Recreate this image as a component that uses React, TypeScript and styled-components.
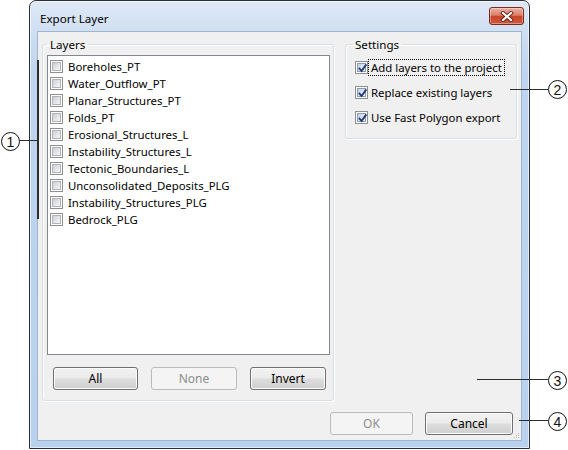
import React from 'react';
import styled, { createGlobalStyle } from 'styled-components';

const GlobalStyle = createGlobalStyle`
  html, body { margin: 0; padding: 0; background: #fff; }
  body { font-family: "Noto Sans", "Open Sans", sans-serif; font-size: 11.4px; color: #000; }
  * { box-sizing: border-box; }
`;

const Page = styled.div`
  position: relative;
  width: 568px;
  height: 450px;
  display: flex;
  padding-left: 29px;
`;

const Window = styled.div`
  width: 501px;
  height: 449px;
  display: flex;
  flex-direction: column;
  border: 1px solid #2b2f36;
  border-radius: 7px 7px 0 0;
  padding: 0 7px 7px 7px;
  background: linear-gradient(#dfe9f6 0px, #d0dff2 30px, #bfd5ef 70px, #b9d1ee 100%);
  box-shadow: inset 0 0 0 1px rgba(255, 255, 255, 0.6);
`;

const TitleBar = styled.div`
  height: 30px;
  display: flex;
  justify-content: space-between;
  align-items: flex-start;
  margin-right: -2px;
`;

const Title = styled.div`
  padding: 10px 0 0 3px;
  line-height: 16px;
  font-size: 11.6px;
  color: #000;
`;

const CloseButton = styled.div`
  margin-top: 6px;
  width: 35px;
  height: 18px;
  border: 1px solid #7a2a1b;
  border-radius: 3px;
  background: linear-gradient(#ebb3a5 0%, #dd7e68 45%, #c8442a 52%, #cc5a40 100%);
  display: flex;
  align-items: center;
  justify-content: center;
  box-shadow: inset 0 0 0 1px rgba(255, 255, 255, 0.35);
`;

const Client = styled.div`
  position: relative;
  flex: 1;
  display: flex;
  flex-direction: column;
  background: #f0f0f0;
  border: 1px solid #9fb4cf;
`;

const TopArea = styled.div`
  display: flex;
  align-items: flex-start;
  padding: 5px 0 0 4px;
`;

const Group = styled.fieldset<{ $w: number; $pad: string; $ml?: number }>`
  margin: 0 0 0 ${(p) => p.$ml ?? 0}px;
  width: ${(p) => p.$w}px;
  min-width: 0;
  border: 1px solid #d5dfe5;
  border-radius: 3px;
  box-shadow: inset 1px 1px 0 #fff, 1px 1px 0 #fff;
  padding: ${(p) => p.$pad};
  display: flex;
  flex-direction: column;
`;

const Legend = styled.legend`
  padding: 0 3px;
  line-height: 15px;
  font-size: 11.6px;
  color: #000;
`;

const ListBox = styled.div`
  height: 300px;
  border: 1px solid #828790;
  background: #fff;
  padding: 2px;
  display: flex;
  flex-direction: column;
`;

const ListItem = styled.div`
  height: 17px;
  display: flex;
  align-items: center;
  gap: 5px;
  line-height: 15px;
  white-space: nowrap;
`;

const Box = styled.span<{ $checked?: boolean }>`
  flex: none;
  width: 13px;
  height: 13px;
  border: 1px solid #8e8f8f;
  background: #fff;
  padding: 1px;
  display: flex;
  & > span {
    flex: 1;
    border: 1px solid ${(p) => (p.$checked ? '#8c9bb5' : '#b0b4ba')};
    background: ${(p) =>
      p.$checked
        ? 'linear-gradient(135deg, #c3cfe6 0%, #e2e9f5 60%, #f5f7fb 100%)'
        : 'linear-gradient(135deg, #cbcfd5 0%, #e3e5e8 55%, #f6f6f6 100%)'};
    position: relative;
  }
  & svg {
    position: absolute;
    left: -2px;
    top: -2px;
  }
`;

const ButtonRow = styled.div<{ $gap: number }>`
  display: flex;
  gap: ${(p) => p.$gap}px;
`;

const LayerButtons = styled(ButtonRow)`
  margin-top: 12px;
  padding-left: 6px;
`;

const Button = styled.button<{ $w: number }>`
  width: ${(p) => p.$w}px;
  height: 23px;
  padding: 0;
  font-family: inherit;
  font-size: 12px;
  color: #000;
  border: 1px solid #707070;
  border-radius: 3px;
  background: linear-gradient(#f2f2f2 0%, #ebebeb 48%, #dddddd 52%, #cfcfcf 100%);
  box-shadow: inset 0 0 0 1px #fbfbfb;
  &:disabled {
    border-color: #b8bcbf;
    background: #f4f4f4;
    color: #8d8d8d;
    box-shadow: none;
  }
`;

const OptionList = styled.div`
  display: flex;
  flex-direction: column;
  gap: 8px;
  padding-left: 3px;
`;

const OptionRow = styled.div`
  height: 17px;
  display: flex;
  align-items: center;
  white-space: nowrap;
`;

const OptionText = styled.span<{ $focus?: boolean }>`
  padding: 0 2px;
  line-height: 15px;
  border: 1px ${(p) => (p.$focus ? 'dotted #000' : 'solid transparent')};
`;

const Spacer = styled.div`
  flex: 1;
`;

const Footer = styled(ButtonRow)`
  justify-content: flex-end;
  padding: 0 8px 5px 0;
`;

const Grip = styled.svg`
  position: absolute;
  right: 1px;
  bottom: 1px;
`;

const Mark = styled.div<{ $x: number; $y: number }>`
  position: absolute;
  left: ${(p) => p.$x - 9}px;
  top: ${(p) => p.$y - 9}px;
  width: 19px;
  height: 19px;
  border: 1.3px solid #111;
  border-radius: 50%;
  background: #fff;
  display: flex;
  align-items: center;
  justify-content: center;
  font-family: "Liberation Sans", Arial, sans-serif;
  font-size: 14px;
  line-height: 1;
  color: #111;
`;

const Leader = styled.div<{ $x: number; $y: number; $w: number; $h: number }>`
  position: absolute;
  left: ${(p) => p.$x}px;
  top: ${(p) => p.$y}px;
  width: ${(p) => p.$w}px;
  height: ${(p) => p.$h}px;
  background: #2d2d2d;
`;

const Check = () => (
  <svg width="13" height="13" viewBox="0 0 13 13">
    <path d="M3.5 6.5 L5.6 9 L9.8 3.2" fill="none" stroke="#243b76" strokeWidth="1.9" strokeLinecap="square" />
  </svg>
);

const CheckBox = ({ checked }: { checked?: boolean }) => (
  <Box $checked={checked}>
    <span>{checked && <Check />}</span>
  </Box>
);

const layers = [
  'Boreholes_PT',
  'Water_Outflow_PT',
  'Planar_Structures_PT',
  'Folds_PT',
  'Erosional_Structures_L',
  'Instability_Structures_L',
  'Tectonic_Boundaries_L',
  'Unconsolidated_Deposits_PLG',
  'Instability_Structures_PLG',
  'Bedrock_PLG',
];

const options = [
  { text: 'Add layers to the project', focus: true },
  { text: 'Replace existing layers' },
  { text: 'Use Fast Polygon export' },
];

export default function App() {
  return (
    <Page>
      <GlobalStyle />
      <Window>
        <TitleBar>
          <Title>Export Layer</Title>
          <CloseButton>
            <svg width="14" height="11" viewBox="0 0 14 11">
              <path d="M3 2 L11 9 M11 2 L3 9" stroke="#6a2316" strokeWidth="4" strokeLinecap="square" />
              <path d="M3 2 L11 9 M11 2 L3 9" stroke="#fff" strokeWidth="2.2" strokeLinecap="square" />
            </svg>
          </CloseButton>
        </TitleBar>
        <Client>
          <TopArea>
            <Group $w={292} $pad="3px 3px 10px 4px">
              <Legend>Layers</Legend>
              <ListBox>
                {layers.map((l) => (
                  <ListItem key={l}>
                    <CheckBox />
                    <span>{l}</span>
                  </ListItem>
                ))}
              </ListBox>
              <LayerButtons $gap={13}>
                <Button $w={85}>All</Button>
                <Button $w={86} disabled>
                  None
                </Button>
                <Button $w={76}>Invert</Button>
              </LayerButtons>
            </Group>
            <Group $w={172} $pad="7px 4px 12px 6px" $ml={11}>
              <Legend>Settings</Legend>
              <OptionList>
                {options.map((o) => (
                  <OptionRow key={o.text}>
                    <CheckBox checked />
                    <OptionText $focus={o.focus}>{o.text}</OptionText>
                  </OptionRow>
                ))}
              </OptionList>
            </Group>
          </TopArea>
          <Spacer />
          <Footer $gap={12}>
            <Button $w={83} disabled>
              OK
            </Button>
            <Button $w={88}>Cancel</Button>
          </Footer>
          <Grip width="7" height="7" viewBox="0 0 7 7">
            <rect x="5" y="1" width="1" height="1" fill="#b5b5b5" />
            <rect x="3" y="3" width="1" height="1" fill="#b5b5b5" />
            <rect x="5" y="3" width="1" height="1" fill="#b5b5b5" />
            <rect x="1" y="5" width="1" height="1" fill="#b5b5b5" />
            <rect x="3" y="5" width="1" height="1" fill="#b5b5b5" />
            <rect x="5" y="5" width="1" height="1" fill="#b5b5b5" />
          </Grip>
        </Client>
      </Window>

      <Leader $x={37} $y={60} $w={2} $h={159} />
      <Leader $x={19} $y={140} $w={19} $h={1} />
      <Mark $x={10} $y={141}>1</Mark>

      <Leader $x={510} $y={89} $w={38} $h={1} />
      <Mark $x={557} $y={89}>2</Mark>

      <Leader $x={477} $y={379} $w={71} $h={1} />
      <Mark $x={557} $y={380}>3</Mark>

      <Leader $x={519} $y={420} $w={29} $h={1} />
      <Mark $x={557} $y={421}>4</Mark>
    </Page>
  );
}
